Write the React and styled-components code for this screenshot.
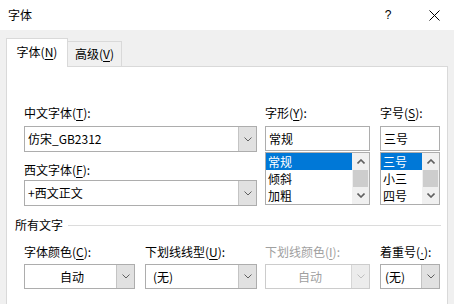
import styled, { createGlobalStyle } from 'styled-components';

const GlobalStyle = createGlobalStyle`
  html, body {
    margin: 0;
    padding: 0;
    background: #f0f0f0;
  }
  body {
    font-family: "Noto Sans CJK SC", "Noto Sans", sans-serif;
    font-size: 12px;
    color: #000;
  }
  u {
    text-decoration: underline;
    text-underline-offset: 2px;
    text-decoration-thickness: 1px;
  }
`;

const Window = styled.div`
  width: 454px;
  height: 304px;
  overflow: hidden;
  display: flex;
  flex-direction: column;
  background: #f0f0f0;
`;

const TitleBar = styled.div`
  flex: none;
  height: 30px;
  background: #fff;
  display: flex;
  align-items: center;
  padding-left: 8px;
  margin-right: -3px;
`;

const Title = styled.div`
  flex: 1;
  line-height: 16px;
`;

const TitleButton = styled.div`
  width: 46px;
  height: 30px;
  display: flex;
  align-items: center;
  justify-content: center;
  font-size: 12px;
  font-family: "Liberation Sans", sans-serif;
`;

const TabStrip = styled.div`
  flex: none;
  height: 29px;
  padding: 8px 0 0 6px;
  display: flex;
  align-items: flex-start;
  position: relative;
  z-index: 1;
`;

const Tab = styled.div`
  box-sizing: border-box;
  height: ${p => (p.$active ? '29px' : '25px')};
  margin-top: ${p => (p.$active ? '0' : '3px')};
  width: ${p => p.$width}px;
  background: ${p => (p.$active ? '#fff' : '#f0f0f0')};
  border: 1px solid #d9d9d9;
  border-bottom: none;
  border-left: ${p => (p.$active ? '1px solid #d9d9d9' : 'none')};
  display: flex;
  align-items: center;
  justify-content: center;
  line-height: 16px;
  padding-bottom: ${p => (p.$active ? '2px' : '0')};
`;

const Panel = styled.div`
  flex: 1;
  margin: -1px 6px 0 6px;
  background: #fff;
  border: 1px solid #d9d9d9;
  border-bottom: none;
  padding: 38px 6px 0 17px;
`;

const TopRow = styled.div`
  display: flex;
  align-items: flex-start;
`;

const Column = styled.div`
  width: ${p => p.$width}px;
  margin-left: ${p => p.$gap || 0}px;
  flex: none;
  display: flex;
  flex-direction: column;
`;

const Label = styled.div`
  height: 16px;
  line-height: 16px;
  white-space: nowrap;
  color: ${p => (p.$disabled ? '#a0a0a0' : '#000')};
  margin-top: ${p => p.$top || 0}px;
`;

const LatinKey = styled.u`
  font-family: "Liberation Sans", sans-serif;
`;

const Combo = styled.div`
  box-sizing: border-box;
  height: ${p => p.$height || 25}px;
  margin-top: ${p => p.$top || 0}px;
  border: 1px solid ${p => (p.$disabled ? '#cccccc' : '#adadad')};
  background: #fff;
  display: flex;
`;

const ComboText = styled.div`
  flex: 1;
  display: flex;
  align-items: center;
  justify-content: ${p => (p.$center ? 'center' : 'flex-start')};
  padding-left: ${p => p.$pad || 3}px;
  color: ${p => (p.$disabled ? '#a0a0a0' : '#000')};
  white-space: nowrap;
  line-height: 16px;
`;

const ComboButton = styled.div`
  box-sizing: border-box;
  width: ${p => p.$width || 18}px;
  background: ${p => (p.$disabled ? '#ececec' : '#e1e1e1')};
  border-left: 1px solid ${p => (p.$disabled ? '#d6d6d6' : '#c4c4c4')};
  display: flex;
  align-items: center;
  justify-content: center;
`;

const TextInput = styled.div`
  box-sizing: border-box;
  height: 25px;
  margin-top: 5px;
  border: 1px solid #adadad;
  display: flex;
  align-items: center;
  padding-left: 3px;
  line-height: 16px;
`;

const ListBox = styled.div`
  box-sizing: border-box;
  height: 53px;
  margin-top: 1px;
  border: 1px solid #adadad;
  display: flex;
`;

const ListItems = styled.div`
  flex: 1;
  display: flex;
  flex-direction: column;
`;

const ListItem = styled.div`
  height: 17px;
  line-height: 17px;
  padding-left: 2px;
  background: ${p => (p.$selected ? '#0078d7' : 'transparent')};
  color: ${p => (p.$selected ? '#fff' : '#000')};
  white-space: nowrap;
`;

const ScrollBar = styled.div`
  width: 17px;
  background: #f0f0f0;
  display: flex;
  flex-direction: column;
`;

const ScrollArrow = styled.div`
  height: 17px;
  display: flex;
  align-items: center;
  justify-content: center;
`;

const ScrollThumb = styled.div`
  height: 17px;
  margin: 0 1px;
  background: #cdcdcd;
`;

const Divider = styled.div`
  display: flex;
  align-items: center;
  margin: 11px 0 0 -9px;
  height: 16px;
  line-height: 16px;
`;

const DividerLine = styled.div`
  flex: 1;
  height: 1px;
  margin-left: 5px;
  background: #dcdcdc;
`;

const BottomRow = styled.div`
  display: flex;
  margin-top: 11px;
`;

const Chevron = ({ up, color = '#606060', width = 1 }) => (
  <svg width="8" height="5" viewBox="0 0 8 5">
    <polyline
      points={up ? '0.5,4.5 4,1 7.5,4.5' : '0.5,0.5 4,4 7.5,0.5'}
      fill="none"
      stroke={color}
      strokeWidth={width}
    />
  </svg>
);

const CloseIcon = () => (
  <svg width="11" height="11" viewBox="0 0 11 11">
    <path d="M0.5 0.5 L10.5 10.5 M10.5 0.5 L0.5 10.5" stroke="#000" strokeWidth="1" />
  </svg>
);

function Dropdown({ text, center, pad, disabled, top, height, btn }) {
  return (
    <Combo $top={top} $height={height} $disabled={disabled}>
      <ComboText $center={center} $pad={pad} $disabled={disabled}>{text}</ComboText>
      <ComboButton $disabled={disabled} $width={btn}>
        <Chevron color={disabled ? '#c0c0c0' : '#606060'} />
      </ComboButton>
    </Combo>
  );
}

function ScrollList({ items, selected }) {
  return (
    <ListBox>
      <ListItems>
        {items.map(it => (
          <ListItem key={it} $selected={it === selected}>{it}</ListItem>
        ))}
      </ListItems>
      <ScrollBar>
        <ScrollArrow><Chevron up width={1.6} /></ScrollArrow>
        <ScrollThumb />
        <ScrollArrow><Chevron width={1.6} /></ScrollArrow>
      </ScrollBar>
    </ListBox>
  );
}

export default function App() {
  return (
    <>
      <GlobalStyle />
      <Window>
        <TitleBar>
          <Title>字体</Title>
          <TitleButton>?</TitleButton>
          <TitleButton><CloseIcon /></TitleButton>
        </TitleBar>

        <TabStrip>
          <Tab $active $width={62}>字体(<u>N</u>)</Tab>
          <Tab $width={54}>高级(<u>V</u>)</Tab>
        </TabStrip>

        <Panel>
          <TopRow>
            <Column $width={233}>
              <Label>中文字体(<u>T</u>):</Label>
              <Dropdown text="仿宋_GB2312" top={5} height={26} />
              <Label $top={10}>西文字体(<u>F</u>):</Label>
              <Dropdown text="+西文正文" top={2} height={26} />
            </Column>
            <Column $width={105} $gap={8}>
              <Label>字形(<u>Y</u>):</Label>
              <TextInput>常规</TextInput>
              <ScrollList items={['常规', '倾斜', '加粗']} selected="常规" />
            </Column>
            <Column $width={60} $gap={10}>
              <Label>字号(<u>S</u>):</Label>
              <TextInput>三号</TextInput>
              <ScrollList items={['三号', '小三', '四号']} selected="三号" />
            </Column>
          </TopRow>

          <Divider>
            所有文字
            <DividerLine />
          </Divider>

          <BottomRow>
            <Column $width={111}>
              <Label>字体颜色(<u>C</u>):</Label>
              <Dropdown text="自动" center top={4} />
            </Column>
            <Column $width={112} $gap={10}>
              <Label>下划线线型(<u>U</u>):</Label>
              <Dropdown text="(无)" pad={7} top={4} />
            </Column>
            <Column $width={105} $gap={8}>
              <Label $disabled>下划线颜色(<u>I</u>):</Label>
              <Dropdown text="自动" center disabled top={4} />
            </Column>
            <Column $width={60} $gap={10}>
              <Label>着重号(<LatinKey>·</LatinKey>):</Label>
              <Dropdown text="(无)" pad={4} top={4} />
            </Column>
          </BottomRow>
        </Panel>
      </Window>
    </>
  );
}
